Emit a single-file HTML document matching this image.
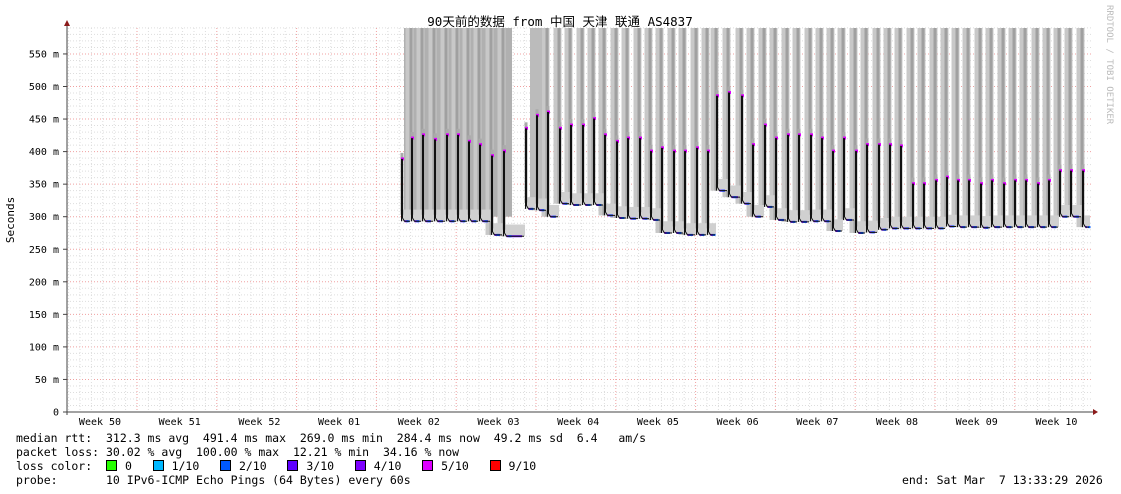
<!DOCTYPE html>
<html><head><meta charset="utf-8"><style>
html,body{margin:0;padding:0;background:#fff;width:1121px;height:494px;overflow:hidden}
svg text{font-family:"DejaVu Sans Mono","Liberation Mono","Noto Sans CJK SC",monospace}
.leg{position:absolute;left:16px;font-family:"DejaVu Sans Mono","Liberation Mono",monospace;font-size:11.5px;white-space:pre;color:#000;line-height:14px}
.sq{display:inline-block;width:9px;height:9px;border:1px solid #000;vertical-align:-1px;margin-right:1px}
</style></head><body>
<svg id="g" width="1121" height="494" style="position:absolute;left:0;top:0" xmlns="http://www.w3.org/2000/svg"></svg>
<div class="leg" style="top:431px">median rtt:  312.3 ms avg  491.4 ms max  269.0 ms min  284.4 ms now  49.2 ms sd  6.4   am/s</div>
<div class="leg" style="top:445px">packet loss: 30.02 % avg  100.00 % max  12.21 % min  34.16 % now</div>
<div class="leg" style="top:459px">loss color:  <span class="sq" style="background:#26ff00"></span> 0   <span class="sq" style="background:#00b8ff"></span> 1/10   <span class="sq" style="background:#0059ff"></span> 2/10   <span class="sq" style="background:#5e00ff"></span> 3/10   <span class="sq" style="background:#7e00ff"></span> 4/10   <span class="sq" style="background:#dd00ff"></span> 5/10   <span class="sq" style="background:#ff0000"></span> 9/10</div>
<div class="leg" style="top:473px">probe:       10 IPv6-ICMP Echo Pings (64 Bytes) every 60s</div>
<div class="leg" style="top:473px;left:902px">end: Sat Mar  7 13:33:29 2026</div>
<script>
var s='',X0=67,X1=1093,Y0=412,k=0.651;
function y(v){return Y0-v*k}
for(var v=10;v<=590;v+=10){var yy=y(v);s+='<line x1="'+X0+'" x2="'+X1+'" y1="'+yy+'" y2="'+yy+'" stroke="'+(v%50?'#ddd':'#f0a0a0')+'" stroke-dasharray="1,2" stroke-width="1"/>'}
for(var i=0;i<=90;i++){var xx=X0+1.6+i*11.4;if(xx>X1)break;var maj=((i-6)%7==0);s+='<line x1="'+xx+'" x2="'+xx+'" y1="28" y2="'+Y0+'" stroke="'+(maj?'#f0a0a0':'#ddd')+'" stroke-dasharray="1,2"/>'}
var P=[[401,388,293],[411,420,293],[422,425,293],[434,418,293],[446,425,293],[457,425,293],[468,415,293],[479,410,293],[491,393,272],[503,400,270],[525,435,312],[536,455,310],[547,460,300],[559,435,320],[570,440,318],[582,440,318],[593,450,318],[604,425,302],[616,415,298],[627,420,297],[639,420,297],[650,400,295],[661,405,275],[673,400,275],[684,400,272],[696,405,272],[707,400,272],[716,485,340],[728,490,330],[741,485,320],[752,410,300],[764,440,315],[775,420,295],[787,425,292],[798,425,292],[810,425,293],[821,420,293],[832,400,278],[843,420,295],[855,400,275],[866,410,276],[878,410,280],[889,410,282],[900,408,282],[912,350,282],[923,350,282],[935,355,282],[946,360,285],[957,355,284],[968,355,284],[980,350,283],[991,355,284],[1003,350,284],[1014,355,284],[1025,355,284],[1037,350,284],[1048,355,284],[1059,370,300],[1070,370,300],[1082,370,284]];
var sm='',bars='',ln='',dots='';
for(var i=0;i<P.length;i++){var p=P[i],x=p[0]+0.5,nx=(i+1<P.length?P[i+1][0]:1090),b=p[2];
 if(p[0]!=401&&p[0]!=525){bars+='<rect x="'+(x-6)+'" y="28" width="8" height="'+(y(b)-28)+'" fill="#c8c8c8"/>';bars+='<rect x="'+(x-2)+'" y="28" width="3" height="'+(y(b)-28)+'" fill="#a0a0a0"/>'}
 sm+='<rect x="'+x+'" y="'+y(b+18)+'" width="'+(nx-x)+'" height="'+(18*k)+'" fill="#d0d0d0"/>';
 sm+='<rect x="'+(x-1)+'" y="'+y(p[1]+10)+'" width="3" height="'+((p[1]-b)*k)+'" fill="#aaa"/>';
 ln+='M'+x+' '+y(b)+'L'+x+' '+y(p[1])+'L'+(x+1)+' '+y(p[1])+'L'+(x+1)+' '+y(b+5)+'L'+(x+3)+' '+y(b)+'L'+(nx-1)+' '+y(b);
 dots+='<rect x="'+(x-0.5)+'" y="'+(y(p[1])-2)+'" width="3" height="3" fill="#dd00ff"/>';
 dots+='<rect x="'+(x+3)+'" y="'+(y(b)-1)+'" width="'+(nx-x-6)+'" height="2" fill="#5e00ff"/>';
 dots+='<rect x="'+(x+5)+'" y="'+(y(b)-1)+'" width="3" height="2" fill="#0059ff"/>';
}
s+='<rect x="404" y="28" width="108" height="'+(y(300)-28)+'" fill="#b0b0b0"/>'+bars+'<rect x="530" y="28" width="12" height="'+(y(310)-28)+'" fill="#bbb"/>'+sm+dots+'<path d="'+ln+'" fill="none" stroke="#111" stroke-width="1"/>';
s+='<line x1="'+X0+'" x2="'+X0+'" y1="24" y2="'+(Y0+3)+'" stroke="#444"/><line x1="'+(X0-3)+'" x2="'+X1+'" y1="'+Y0+'" y2="'+Y0+'" stroke="#444"/>';
s+='<path d="M64 26L67 20L70 26Z" fill="#8b1a1a"/><path d="M1093 409L1098 412L1093 415Z" fill="#8b1a1a"/>';
for(var v=0;v<=550;v+=50){var yy=y(v);s+='<line x1="63" x2="67" y1="'+yy+'" y2="'+yy+'" stroke="#444"/><text x="59" y="'+(yy+3.5)+'" font-size="10" text-anchor="end">'+(v?v+' m':'0')+'</text>'}
var w=['50','51','52','01','02','03','04','05','06','07','08','09','10'];
for(var i=0;i<w.length;i++)s+='<text x="'+(100+i*79.7)+'" y="425" font-size="10" text-anchor="middle">Week '+w[i]+'</text>';
s+='<text x="560" y="26" font-size="12.5" text-anchor="middle">90天前的数据 from 中国 天津 联通 AS4837</text>';
s+='<text transform="translate(14,220) rotate(-90)" font-size="11" text-anchor="middle">Seconds</text>';
s+='<text transform="translate(1107,5) rotate(90)" font-size="9" fill="#bbb">RRDTOOL / TOBI OETIKER</text>';
document.getElementById('g').innerHTML=s;
</script>
</body></html>
